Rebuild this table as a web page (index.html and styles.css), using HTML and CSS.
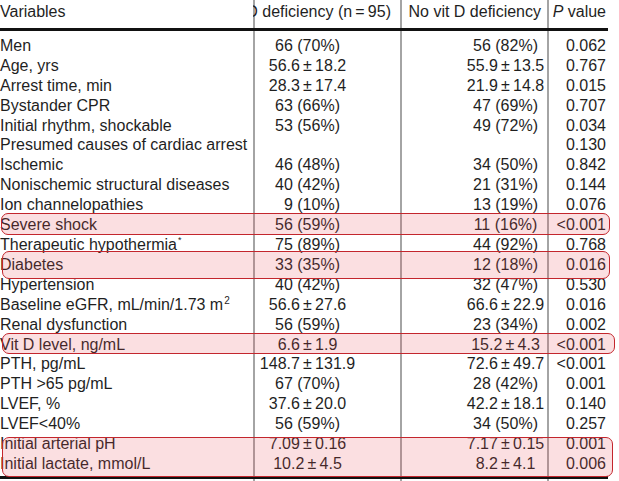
FILE: index.html
```html
<!DOCTYPE html>
<html lang="en">
<head>
<meta charset="utf-8">
<title>Table</title>
<link rel="stylesheet" href="styles.css">
</head>
<body>
<div class="sheet">
  <div class="table">
    <div class="row head">
      <div class="c1">Variables</div>
      <div class="h2"><span>Vit D deficiency (n&#8201;=&#8201;95)</span></div>
      <div class="h3">No vit D deficiency</div>
      <div class="c4"><i>P</i> value</div>
    </div>
    <div class="body">
      <div class="row"><div class="c1">Men</div><div class="c2">66 (70%)</div><div class="c3">56 (82%)</div><div class="c4">0.062</div></div>
      <div class="row"><div class="c1">Age, yrs</div><div class="c2">56.6&#8201;±&#8201;18.2</div><div class="c3">55.9&#8201;±&#8201;13.5</div><div class="c4">0.767</div></div>
      <div class="row"><div class="c1">Arrest time, min</div><div class="c2">28.3&#8201;±&#8201;17.4</div><div class="c3">21.9&#8201;±&#8201;14.8</div><div class="c4">0.015</div></div>
      <div class="row"><div class="c1">Bystander CPR</div><div class="c2">63 (66%)</div><div class="c3">47 (69%)</div><div class="c4">0.707</div></div>
      <div class="row"><div class="c1">Initial rhythm, shockable</div><div class="c2">53 (56%)</div><div class="c3">49 (72%)</div><div class="c4">0.034</div></div>
      <div class="row"><div class="c1">Presumed causes of cardiac arrest</div><div class="c2"></div><div class="c3"></div><div class="c4">0.130</div></div>
      <div class="row"><div class="c1">Ischemic</div><div class="c2">46 (48%)</div><div class="c3">34 (50%)</div><div class="c4">0.842</div></div>
      <div class="row"><div class="c1">Nonischemic structural diseases</div><div class="c2">40 (42%)</div><div class="c3">21 (31%)</div><div class="c4">0.144</div></div>
      <div class="row"><div class="c1">Ion channelopathies</div><div class="c2">&#8199;9 (10%)</div><div class="c3">13 (19%)</div><div class="c4">0.076</div></div>
      <div class="row"><div class="c1">Severe shock</div><div class="c2">56 (59%)</div><div class="c3">11 (16%)</div><div class="c4">&lt;0.001</div></div>
      <div class="row"><div class="c1">Therapeutic hypothermia<span class="ast">*</span></div><div class="c2">75 (89%)</div><div class="c3">44 (92%)</div><div class="c4">0.768</div></div>
      <div class="row"><div class="c1">Diabetes</div><div class="c2">33 (35%)</div><div class="c3">12 (18%)</div><div class="c4">0.016</div></div>
      <div class="row"><div class="c1">Hypertension</div><div class="c2">40 (42%)</div><div class="c3">32 (47%)</div><div class="c4">0.530</div></div>
      <div class="row"><div class="c1">Baseline eGFR, mL/min/1.73 m<span class="sup">2</span></div><div class="c2">56.6&#8201;±&#8201;27.6</div><div class="c3">66.6&#8201;±&#8201;22.9</div><div class="c4">0.016</div></div>
      <div class="row"><div class="c1">Renal dysfunction</div><div class="c2">56 (59%)</div><div class="c3">23 (34%)</div><div class="c4">0.002</div></div>
      <div class="row"><div class="c1">Vit D level, ng/mL</div><div class="c2">6.6&#8201;±&#8201;1.9</div><div class="c3">15.2&#8201;±&#8201;4.3</div><div class="c4">&lt;0.001</div></div>
      <div class="row"><div class="c1">PTH, pg/mL</div><div class="c2">148.7&#8201;±&#8201;131.9</div><div class="c3">72.6&#8201;±&#8201;49.7</div><div class="c4">&lt;0.001</div></div>
      <div class="row"><div class="c1">PTH &gt;65 pg/mL</div><div class="c2">67 (70%)</div><div class="c3">28 (42%)</div><div class="c4">0.001</div></div>
      <div class="row"><div class="c1">LVEF, %</div><div class="c2">37.6&#8201;±&#8201;20.0</div><div class="c3">42.2&#8201;±&#8201;18.1</div><div class="c4">0.140</div></div>
      <div class="row"><div class="c1">LVEF&lt;40%</div><div class="c2">56 (59%)</div><div class="c3">34 (50%)</div><div class="c4">0.257</div></div>
      <div class="row"><div class="c1">Initial arterial pH</div><div class="c2">7.09&#8201;±&#8201;0.16</div><div class="c3">7.17&#8201;±&#8201;0.15</div><div class="c4">0.001</div></div>
      <div class="row"><div class="c1">Initial lactate, mmol/L</div><div class="c2">10.2&#8201;±&#8201;4.5</div><div class="c3">8.2&#8201;±&#8201;4.1</div><div class="c4">0.006</div></div>
    </div>
  </div>
  <div class="mark m1"></div>
  <div class="mark m2"></div>
  <div class="mark m3"></div>
  <div class="mark m4"></div>
</div>
</body>
</html>
```
FILE: styles.css
```css
html, body {
  margin: 0;
  background: #fff;
}
body {
  font-family: "Liberation Sans", Arial, sans-serif;
  font-size: 16px;
  line-height: 19.9px;
  color: #1f1f1f;
}
.sheet {
  position: relative;
  width: 619px;
  height: 481px;
  overflow: hidden;
  background:
    linear-gradient(#a4a4a4, #a4a4a4) 253px 0 / 2px 100% no-repeat,
    linear-gradient(#a4a4a4, #a4a4a4) 400px 0 / 2px 100% no-repeat,
    linear-gradient(#a4a4a4, #a4a4a4) 547px 0 / 2px 100% no-repeat,
    #fff;
}
.table {
  width: 608px;
}
.row {
  display: grid;
  grid-template-columns: 253px 147px 147px 61px;
  white-space: nowrap;
}
.head {
  padding: 2px 0 6px;
  border-bottom: 3px solid #111;
}
.body {
  padding: 5px 0 2px;
  border-bottom: 3px solid #111;
}
.c1 {
  text-align: left;
}
.c2 {
  text-align: center;
  padding-right: 38px;
}
.c3 {
  text-align: center;
  padding-left: 64px;
}
.c4 {
  text-align: right;
  padding-right: 2px;
}
.h2 {
  display: flex;
  justify-content: flex-end;
  overflow: hidden;
  padding-right: 9px;
}
.h2 span {
  flex: none;
}
.h3 {
  text-align: right;
  padding-right: 6px;
}
.ast {
  font-size: 9px;
  line-height: 0;
  position: relative;
  top: -7px;
  margin-left: 1px;
}
.sup {
  font-size: 10px;
  line-height: 0;
  position: relative;
  top: -6px;
  margin-left: 1px;
}
.mark {
  position: absolute;
  box-sizing: border-box;
  border: 1.5px solid #c3262d;
  border-radius: 7px;
  background: rgba(235, 80, 90, 0.18);
}
.m1 { left: 1px; top: 213px; width: 609px; height: 22px; }
.m2 { left: 2px; top: 251px; width: 608px; height: 28px; }
.m3 { left: 2px; top: 333px; width: 613px; height: 21px; }
.m4 { left: 2px; top: 437px; width: 611px; height: 40px; }
```
